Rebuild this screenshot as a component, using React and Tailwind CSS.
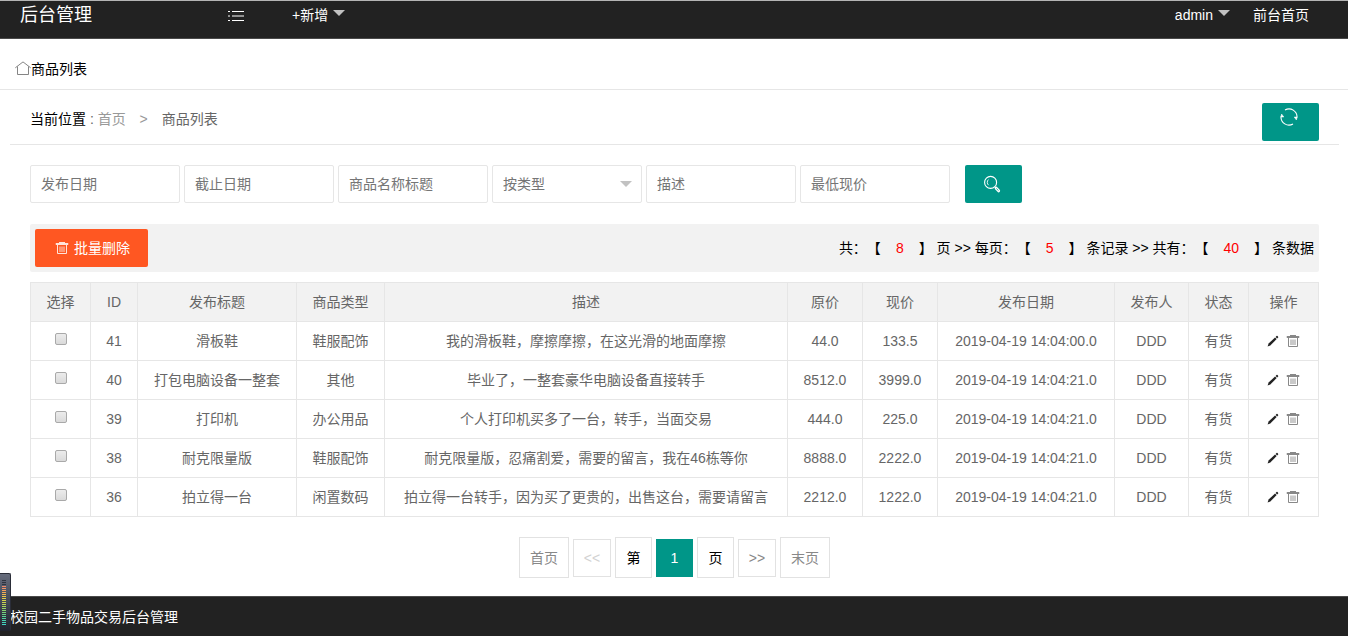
import { useState } from 'react';

const GOODS = [
  { id: 41, title: '滑板鞋', type: '鞋服配饰', desc: '我的滑板鞋，摩擦摩擦，在这光滑的地面摩擦', price: '44.0', now: '133.5', date: '2019-04-19 14:04:00.0' },
  { id: 40, title: '打包电脑设备一整套', type: '其他', desc: '毕业了，一整套豪华电脑设备直接转手', price: '8512.0', now: '3999.0', date: '2019-04-19 14:04:21.0' },
  { id: 39, title: '打印机', type: '办公用品', desc: '个人打印机买多了一台，转手，当面交易', price: '444.0', now: '225.0', date: '2019-04-19 14:04:21.0' },
  { id: 38, title: '耐克限量版', type: '鞋服配饰', desc: '耐克限量版，忍痛割爱，需要的留言，我在46栋等你', price: '8888.0', now: '2222.0', date: '2019-04-19 14:04:21.0' },
  { id: 36, title: '拍立得一台', type: '闲置数码', desc: '拍立得一台转手，因为买了更贵的，出售这台，需要请留言', price: '2212.0', now: '1222.0', date: '2019-04-19 14:04:21.0' },
];

const COLUMNS = [
  { name: '选择', width: 'w-[60px]' },
  { name: 'ID', width: 'w-[47px]' },
  { name: '发布标题', width: 'w-[159px]' },
  { name: '商品类型', width: 'w-[88px]' },
  { name: '描述', width: '' },
  { name: '原价', width: 'w-[75px]' },
  { name: '现价', width: 'w-[75px]' },
  { name: '发布日期', width: 'w-[177px]' },
  { name: '发布人', width: 'w-[74px]' },
  { name: '状态', width: 'w-[60px]' },
  { name: '操作', width: 'w-[70px]' },
];

// level meter, top to bottom
const METER = [
  'bg-[#2f333f]', 'bg-[#2f333f]', 'bg-[#2f333f]',
  'bg-[#f58b6a]', 'bg-[#f59464]', 'bg-[#f5a05c]', 'bg-[#f3ad54]', 'bg-[#f0ba4e]',
  'bg-[#ecc64a]', 'bg-[#e4cf48]', 'bg-[#d9d24a]', 'bg-[#cbd44e]', 'bg-[#bbd554]',
  'bg-[#aad55c]', 'bg-[#98d564]', 'bg-[#86d46e]', 'bg-[#76d478]', 'bg-[#68d384]',
  'bg-[#5bd392]', 'bg-[#50d3a0]', 'bg-[#48d3ae]', 'bg-[#42d3bb]', 'bg-[#3fd3c4]',
];

function Caret() {
  return (
    <svg width="12" height="6" viewBox="0 0 12 6" className="fill-[#c2c2c2]" aria-hidden="true">
      <path d="M0 0h12L6 6z" />
    </svg>
  );
}

function ListIcon() {
  return (
    <svg width="16" height="12" viewBox="0 0 16 12" fill="none" className="stroke-white" aria-hidden="true">
      <path d="M4 1.5h12M4 6h12M4 10.5h12" />
      <path d="M0 1.5h2M0 6h2M0 10.5h2" />
    </svg>
  );
}

function HomeIcon() {
  return (
    <svg width="16" height="16" viewBox="0 0 16 16" fill="none" className="stroke-[#777]" strokeWidth=".9" aria-hidden="true">
      <path d="M.3 6.8 8 .9l7.7 5.9" />
      <path d="M2.5 5.5v8h11v-8" />
    </svg>
  );
}

function RefreshIcon() {
  return (
    <svg width="18" height="18" viewBox="0 0 18 18" fill="none" className="stroke-white" strokeWidth="1.1" aria-hidden="true">
      <path d="M5 2A8 8 0 0 1 17 9.4" />
      <path d="M13 16A8 8 0 0 1 1 8.6" />
      <path d="M14.2 9h3l-.8 3z" fill="white" strokeWidth=".5" />
      <path d="M3.8 9h-3l.8-3z" fill="white" strokeWidth=".5" />
    </svg>
  );
}

function SearchIcon() {
  return (
    <svg width="18" height="18" viewBox="0 0 18 18" fill="none" className="stroke-white" aria-hidden="true">
      <circle cx="7.6" cy="7.4" r="6" strokeWidth="1.1" />
      <path d="M5.6 10.2A3.8 3.8 0 0 1 5.4 4.6" strokeWidth=".9" />
      <path d="m11.6 11.8 1.2 1.2" />
      <path d="m13.2 13.2 2.4 2.6" strokeWidth="3" strokeLinecap="round" />
      <path d="m13.4 13.4 2 2.2" className="stroke-[#009688]" strokeWidth=".8" />
    </svg>
  );
}

function TrashIcon({ className }) {
  return (
    <svg width="14" height="14" viewBox="0 0 14 14" fill="none" className={className} aria-hidden="true">
      <path d="M1 2.5h12v1H1zM4 1.5h6" />
      <path d="M2.5 4v8.5h9V4" />
      <path d="M5 5.5V11M7 5.5V11M9 5.5V11" strokeWidth=".9" />
    </svg>
  );
}

function PencilIcon() {
  return (
    <svg width="12" height="12" viewBox="0 0 12 12" className="fill-[#222]" aria-hidden="true">
      <path d="m.6 11.4 1-2.8L8 2.4l1.7 1.7-6.4 6.3z" />
      <path d="m8.6 1.9.9-.9q.5-.4 1 0l.6.7q.4.5 0 .9l-.9.9z" />
    </svg>
  );
}

function FilterInput({ label }) {
  return (
    <input
      type="text"
      aria-label={label}
      placeholder={label}
      className="h-[38px] w-[150px] rounded-xs border border-[#e6e6e6] bg-white px-[10px] placeholder:text-[#757575]"
    />
  );
}

function Header() {
  return (
    <header className="flex h-[39px] items-start justify-between border-t border-b border-t-[#b4b4b4] border-b-[#4a4a4a] bg-[#222] pr-[39px] pl-5 leading-7 text-white">
      <div className="flex">
        <h1 className="w-[208px] text-lg leading-7">后台管理</h1>
        <button type="button" aria-label="菜单" className="flex h-[30px] w-16 items-center">
          <ListIcon />
        </button>
        <button type="button" className="flex gap-[5px]">
          +新增
          <span className="pt-[9px]"><Caret /></span>
        </button>
      </div>
      <nav className="flex gap-[23px]">
        <button type="button" className="flex gap-[5px]">
          admin
          <span className="pt-[9px]"><Caret /></span>
        </button>
        <a href="#front">前台首页</a>
      </nav>
    </header>
  );
}

function Summary() {
  return (
    <p className="flex gap-1 text-black [text-spacing-trim:space-all]">
      <span>共：【</span>
      <span className="px-[11px] text-[#f00]">8</span>
      <span>】 页 &gt;&gt; 每页：【</span>
      <span className="px-[11px] text-[#f00]">5</span>
      <span>】 条记录 &gt;&gt; 共有：【</span>
      <span className="px-[11px] text-[#f00]">40</span>
      <span>】 条数据</span>
    </p>
  );
}

function GoodsTable({ checked, onToggle }) {
  return (
    <table className="mt-[10px] w-full table-fixed border-collapse text-center text-[#666]">
      <thead>
        <tr className="h-[39px] bg-[#f2f2f2]">
          {COLUMNS.map((col) => (
            <th key={col.name} className={`border border-[#e6e6e6] font-normal ${col.width}`}>
              {col.name}
            </th>
          ))}
        </tr>
      </thead>
      <tbody>
        {GOODS.map((item) => (
          <tr key={item.id} className="h-[39px] *:border *:border-[#e6e6e6]">
            <td>
              <input
                type="checkbox"
                aria-label={`选择 ${item.id}`}
                checked={checked.includes(item.id)}
                onChange={() => onToggle(item.id)}
                className="mx-auto mb-1 block size-3 appearance-none rounded-xs border border-[#a9a9a9] bg-linear-to-b from-[#ececec] to-[#dadada] checked:from-[#009688] checked:to-[#009688]"
              />
            </td>
            <td>{item.id}</td>
            <td>{item.title}</td>
            <td>{item.type}</td>
            <td>{item.desc}</td>
            <td>{item.price}</td>
            <td>{item.now}</td>
            <td>{item.date}</td>
            <td>DDD</td>
            <td>有货</td>
            <td>
              <div className="flex items-center justify-center gap-[7px]">
                <button type="button" aria-label="编辑"><PencilIcon /></button>
                <button type="button" aria-label="删除"><TrashIcon className="stroke-[#888]" /></button>
              </div>
            </td>
          </tr>
        ))}
      </tbody>
    </table>
  );
}

function Pagination() {
  return (
    <nav className="mt-5 flex items-center justify-center gap-1 text-[#888]">
      <a href="#first" className="flex h-[41px] w-[50px] items-center justify-center border border-[#e2e2e2]">首页</a>
      <a href="#prev" className="flex h-[38px] w-[38px] items-center justify-center border border-[#e2e2e2] text-[#d2d2d2]">&lt;&lt;</a>
      <span className="flex h-[41px] w-[37px] items-center justify-center border border-[#e2e2e2] text-black">第</span>
      <span className="flex h-[38px] w-[37px] items-center justify-center bg-[#009688] text-white">1</span>
      <span className="flex h-[41px] w-[37px] items-center justify-center border border-[#e2e2e2] text-black">页</span>
      <a href="#next" className="flex h-[38px] w-[38px] items-center justify-center border border-[#e2e2e2]">&gt;&gt;</a>
      <a href="#last" className="flex h-[41px] w-[50px] items-center justify-center border border-[#e2e2e2]">末页</a>
    </nav>
  );
}

export default function App() {
  const [checked, setChecked] = useState([]);

  const toggle = (id) => {
    setChecked((prev) => (prev.includes(id) ? prev.filter((x) => x !== id) : [...prev, id]));
  };

  return (
    <div className="flex min-h-screen flex-col bg-white font-['Liberation_Sans','Noto_Sans_CJK_SC',sans-serif] text-sm text-black">
      <Header />

      <h2 className="flex h-[51px] items-center border-b border-[#e6e6e6] px-[15px] pt-[10px]">
        <HomeIcon />
        商品列表
      </h2>

      <div className="mr-[9px] ml-[10px] flex h-[55px] items-start justify-between border-b border-[#e6e6e6] px-5 pt-[13px]">
        <div className="flex leading-8">
          当前位置&nbsp;<span className="text-[#666]">:</span>&nbsp;
          <a href="#home" className="text-[#999]">首页</a>
          <span className="w-9 text-center text-[#999]">&gt;</span>
          <span className="text-[#666]">商品列表</span>
        </div>
        <button type="button" aria-label="刷新" className="flex h-[38px] w-[57px] justify-center rounded-xs bg-[#009688] pt-[5px] pr-[3px]">
          <RefreshIcon />
        </button>
      </div>

      <main className="pr-[29px] pl-[30px]">
        <form className="mt-5 flex flex-wrap items-center gap-1">
          <FilterInput label="发布日期" />
          <FilterInput label="截止日期" />
          <FilterInput label="商品名称标题" />
          <div className="relative">
            <select aria-label="按类型" className="block h-[38px] w-[150px] appearance-none rounded-xs border border-[#e6e6e6] bg-white px-[10px] text-[#757575]">
              <option>按类型</option>
            </select>
            <span className="pointer-events-none absolute top-4 right-[10px]"><Caret /></span>
          </div>
          <FilterInput label="描述" />
          <FilterInput label="最低现价" />
          <button type="button" aria-label="搜索" className="ml-[11px] flex h-[38px] w-[57px] items-center justify-center rounded-xs bg-[#009688] pr-[3px]">
            <SearchIcon />
          </button>
        </form>

        <div className="mt-[21px] flex items-center justify-between rounded-xs bg-[#f2f2f2] p-[5px]">
          <button type="button" className="flex h-[38px] items-center gap-[5px] rounded-xs bg-[#ff5722] pr-[18px] pl-5 text-white">
            <TrashIcon className="stroke-[#ffe3da]" />
            批量删除
          </button>
          <Summary />
        </div>

        <GoodsTable checked={checked} onToggle={toggle} />
        <Pagination />
      </main>

      <footer className="mt-auto flex h-10 items-center border-t border-[#4a4a4a] bg-[#222] px-[10px] text-white">
        校园二手物品交易后台管理
      </footer>

      <div className="fixed bottom-[5px] left-0 flex h-[58px] w-[11px] flex-col items-end gap-px rounded-r-xs border-t border-r border-[#2a2d38] bg-linear-to-b from-[#666c7c] to-[#20232e] pt-1.5 pr-1">
        {METER.map((color, i) => (
          <span key={i} className={`h-px w-1 ${color}`} />
        ))}
      </div>
    </div>
  );
}
